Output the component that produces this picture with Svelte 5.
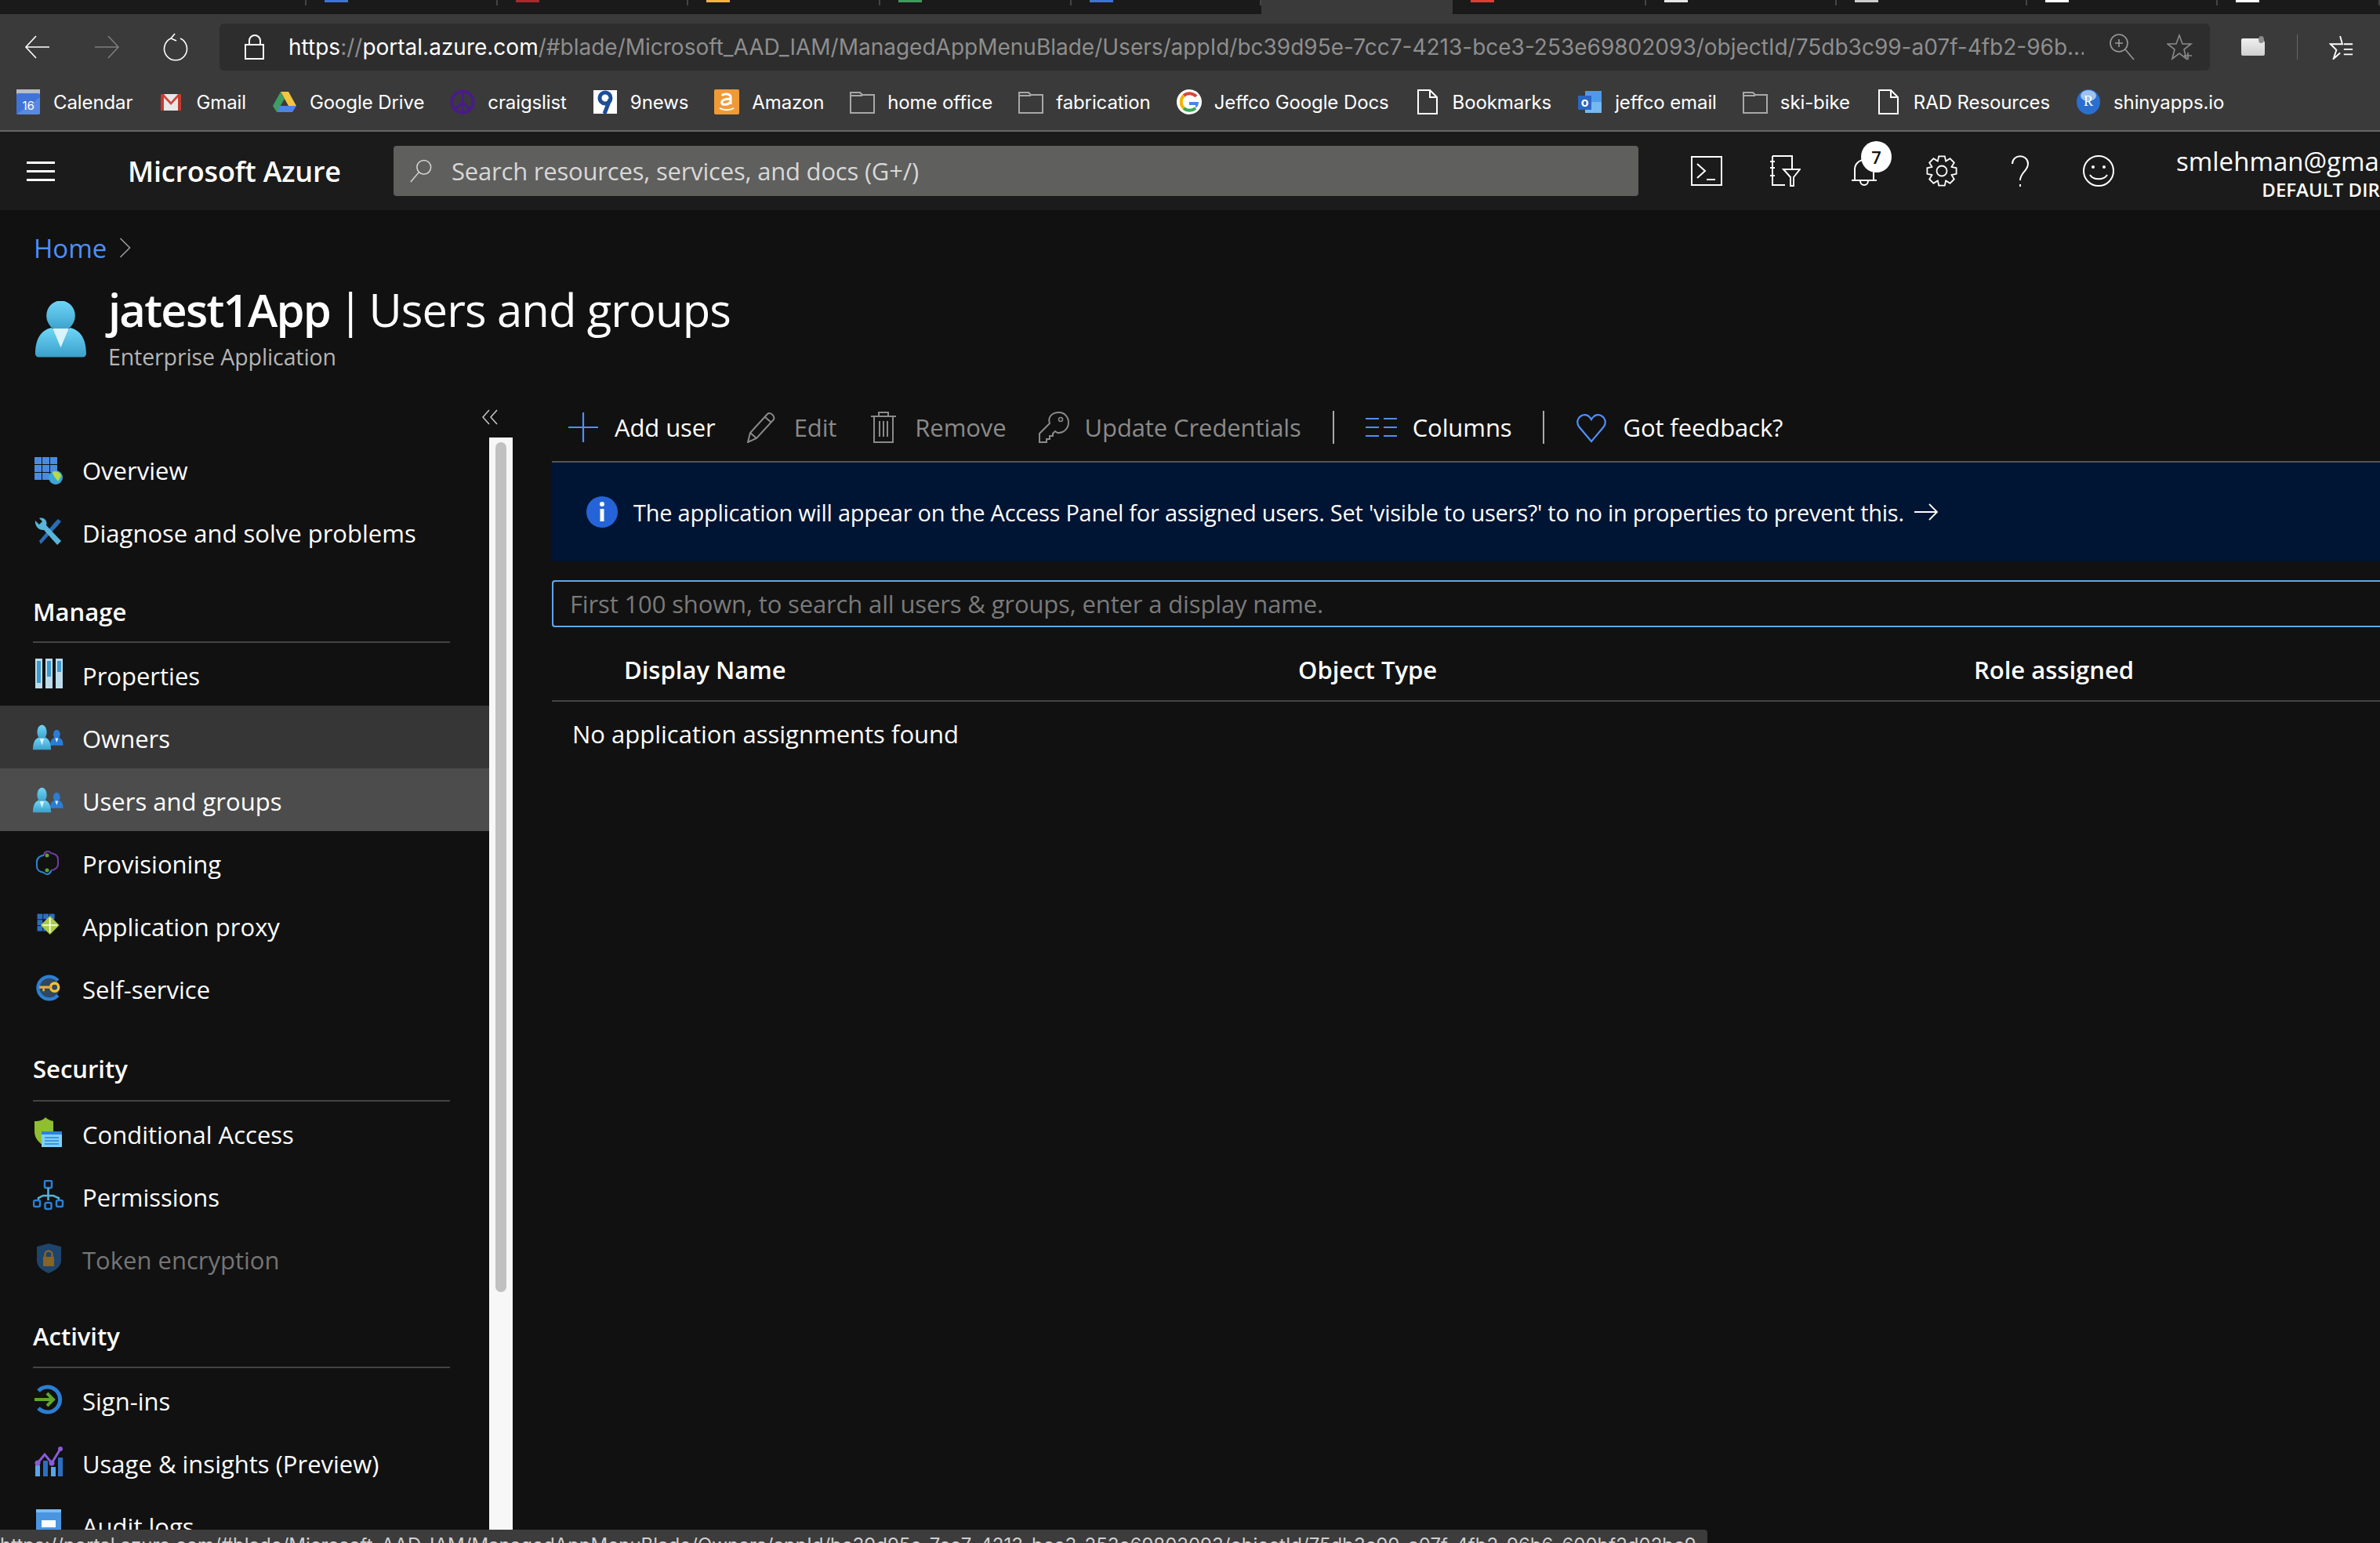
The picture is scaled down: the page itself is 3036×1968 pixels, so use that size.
<script>
  const tabs = [
    { color: '', width: 391 },
    { color: '#3f73d8', width: 244 },
    { color: '#b3242c', width: 243 },
    { color: '#f2b53c', width: 245 },
    { color: '#3f9a5c', width: 244 },
    { color: '#3f73d8', width: 242 },
  ];
  const tabsRight = [
    { color: '#e23b34', width: 247 },
    { color: '#e6e6e6', width: 243 },
    { color: '#cccccc', width: 243 },
    { color: '#ffffff', width: 243 },
    { color: '#ffffff', width: 207 },
  ];

  const bookmarks = [
    { icon: 'calendar', label: 'Calendar' },
    { icon: 'gmail', label: 'Gmail' },
    { icon: 'drive', label: 'Google Drive' },
    { icon: 'peace', label: 'craigslist' },
    { icon: 'nine', label: '9news' },
    { icon: 'amazon', label: 'Amazon' },
    { icon: 'folder', label: 'home office' },
    { icon: 'folder', label: 'fabrication' },
    { icon: 'google', label: 'Jeffco Google Docs' },
    { icon: 'page', label: 'Bookmarks' },
    { icon: 'outlook', label: 'jeffco email' },
    { icon: 'folder', label: 'ski-bike' },
    { icon: 'page', label: 'RAD Resources' },
    { icon: 'rlogo', label: 'shinyapps.io' },
  ];

  const nav = [
    { items: [
      { icon: 'overview', label: 'Overview' },
      { icon: 'tools', label: 'Diagnose and solve problems' },
    ] },
    { title: 'Manage', cls: 'manage', items: [
      { icon: 'properties', label: 'Properties' },
      { icon: 'people', label: 'Owners', state: 'hover' },
      { icon: 'people', label: 'Users and groups', state: 'active' },
      { icon: 'provisioning', label: 'Provisioning' },
      { icon: 'proxy', label: 'Application proxy' },
      { icon: 'selfservice', label: 'Self-service' },
    ] },
    { title: 'Security', cls: 'security', items: [
      { icon: 'conditional', label: 'Conditional Access' },
      { icon: 'permissions', label: 'Permissions' },
      { icon: 'token', label: 'Token encryption', state: 'dim' },
    ] },
    { title: 'Activity', cls: 'activity', items: [
      { icon: 'signin', label: 'Sign-ins' },
      { icon: 'usage', label: 'Usage & insights (Preview)' },
      { icon: 'audit', label: 'Audit logs' },
    ] },
  ];

  // 8 tooth gear outline, centred on 20,20
  function gearPath() {
    const pts = [];
    for (let i = 0; i < 8; i++) {
      const a = (i * Math.PI) / 4 - Math.PI / 2;
      const spots = [
        [-0.39, 13.5],
        [-0.2, 19],
        [0.2, 19],
        [0.39, 13.5],
      ];
      for (const [da, r] of spots) {
        const x = 20 + r * Math.cos(a + da);
        const y = 20 + r * Math.sin(a + da);
        pts.push(`${x.toFixed(1)} ${y.toFixed(1)}`);
      }
    }
    return 'M' + pts.join('L') + 'Z';
  }
  const gear = gearPath();
</script>

{#snippet person(x, y, sx, sy, fill)}
  <g transform="translate({x} {y}) scale({sx} {sy})">
    <ellipse cx="16" cy="9" rx="8.5" ry="9.5" fill={fill} />
    <path d="M0 32c0-10 4-15 11-16l5 6 5-6c7 1 11 6 11 16z" fill={fill} />
    <path d="M12 17h8l-4 9z" fill="#d9f3fb" />
  </g>
{/snippet}

{#snippet bookmarkIcon(name)}
  {#if name === 'calendar'}
    <svg class="bm-icon" viewBox="0 0 32 32">
      <rect x="1" y="0" width="30" height="8" fill="#b9bcc2" />
      <rect x="1" y="5" width="30" height="27" rx="2" fill="#3f73d8" />
      <path d="M1 32 31 10v20a2 2 0 0 1-2 2z" fill="#5a88e0" />
      <text x="16" y="26" class="cal-num">16</text>
    </svg>
  {:else if name === 'gmail'}
    <svg class="bm-icon" viewBox="0 0 32 32">
      <rect x="3" y="6" width="26" height="21" rx="1" fill="#e8e8e8" />
      <path d="M3 6h4l9 10 9-10h4L16 20z" fill="#d44638" />
      <rect x="3" y="6" width="4" height="21" fill="#c23b2f" />
      <rect x="25" y="6" width="4" height="21" fill="#c23b2f" />
    </svg>
  {:else if name === 'drive'}
    <svg class="bm-icon" viewBox="0 0 32 32">
      <path d="M11 3h10l10 18H21z" fill="#f4c63d" />
      <path d="M11 3 1 21l5 8L16 12z" fill="#3f9d62" />
      <path d="M10 21h21l-5 8H6z" fill="#4a86e8" />
    </svg>
  {:else if name === 'peace'}
    <svg class="bm-icon" viewBox="0 0 32 32">
      <circle cx="16" cy="16" r="13.500" fill="none" stroke="#4a1a8c" stroke-width="4" />
      <path d="M16 2v28M16 16 6 26M16 16l10 10" stroke="#4a1a8c" stroke-width="3" fill="none" />
    </svg>
  {:else if name === 'nine'}
    <svg class="bm-icon" viewBox="0 0 32 32">
      <rect x="1" y="1" width="30" height="30" fill="#fff" />
      <circle cx="16" cy="11" r="7" fill="none" stroke="#1c4e9a" stroke-width="5" />
      <path d="M22 13 15 31" stroke="#1c4e9a" stroke-width="5" />
    </svg>
  {:else if name === 'amazon'}
    <svg class="bm-icon" viewBox="0 0 32 32">
      <rect x="0" y="0" width="32" height="32" rx="2" fill="#f09a37" />
      <path d="M10 8c2-3 11-3 11 2v9M21 12c-10 0-12 3-11 6 1 2 8 2 11-2" fill="none" stroke="#fff" stroke-width="3" />
      <path d="M7 24c5 3 13 3 18 0" fill="none" stroke="#fff" stroke-width="2" />
    </svg>
  {:else if name === 'folder'}
    <svg class="bm-icon" viewBox="0 0 32 32">
      <path d="M1 4h12l3 3h15v23H1zM1 8h15" fill="none" stroke="#a8a8a8" stroke-width="2" />
    </svg>
  {:else if name === 'google'}
    <svg class="bm-icon" viewBox="0 0 32 32">
      <circle cx="16" cy="16" r="16" fill="#fff" />
      <path d="M25 9a11.500 11.500 0 0 0-16-1" fill="none" stroke="#d8483b" stroke-width="4" />
      <path d="M9 8a11.500 11.500 0 0 0 0 16" fill="none" stroke="#f4b400" stroke-width="4" />
      <path d="M9 24a11.500 11.500 0 0 0 15 0" fill="none" stroke="#3aa757" stroke-width="4" />
      <path d="M24 24c3-2 4-5 4-8H16v4h8" fill="#4a86e8" />
    </svg>
  {:else if name === 'page'}
    <svg class="bm-icon" viewBox="0 0 32 32">
      <path d="M4 1h15l9 9v21H4zM19 1v9h9" fill="none" stroke="#fff" stroke-width="2" />
    </svg>
  {:else if name === 'outlook'}
    <svg class="bm-icon" viewBox="0 0 32 32">
      <rect x="10" y="2" width="21" height="28" fill="#4c9be8" />
      <path d="M10 16h21v14H10z" fill="#76b9f0" />
      <rect x="1" y="8" width="17" height="18" fill="#2a66c4" />
      <text x="9.500" y="22" class="ol-text">o</text>
    </svg>
  {:else}
    <svg class="bm-icon" viewBox="0 0 32 32">
      <ellipse cx="16" cy="16" rx="15" ry="16" fill="#2a6fd0" />
      <ellipse cx="16" cy="8" rx="10" ry="7" fill="#9cc3f0" />
      <text x="16" y="21" class="r-text">R</text>
    </svg>
  {/if}
{/snippet}

{#snippet navIcon(name)}
  <svg class="nav-icon" viewBox="0 0 40 40">
    {#if name === 'overview'}
      <g fill="#4a8be0">
        <rect x="2" y="3" width="9" height="9" /><rect x="12" y="3" width="9" height="9" /><rect x="22" y="3" width="9" height="9" />
        <rect x="2" y="13" width="9" height="9" /><rect x="12" y="13" width="9" height="9" /><rect x="22" y="13" width="9" height="9" />
        <rect x="2" y="23" width="9" height="9" /><rect x="12" y="23" width="9" height="9" />
      </g>
      <circle cx="29" cy="29" r="9" fill="#3aa5d8" />
      <path d="M25 22c4-2 10 0 11 5l-4 7c-2-3-7-8-7-12z" fill="#b7d94a" />
    {:else if name === 'tools'}
      <path d="M8 30 27 7l5-5 4 3-4 5-22 24z" fill="#2a6cb5" />
      <path d="M3 4l5 5 4-4-4-4c6-2 11 3 9 9l19 20-5 5L14 16c-6 1-12-5-11-12z" fill="#59b4d9" />
    {:else if name === 'properties'}
      <rect x="3" y="0" width="9" height="38" fill="#bcdcec" /><rect x="5" y="3" width="5" height="28" fill="#3a9bd0" />
      <rect x="16" y="0" width="9" height="38" fill="#bcdcec" /><rect x="18" y="3" width="5" height="20" fill="#3a9bd0" />
      <rect x="29" y="0" width="9" height="38" fill="#bcdcec" /><rect x="31" y="3" width="5" height="14" fill="#3a9bd0" />
    {:else if name === 'people'}
      {@render person(22, 11, 0.52, 0.62, '#2b7cd3')}
      {@render person(0, 5, 0.72, 0.98, 'url(#personGrad)')}
    {:else if name === 'provisioning'}
      <path d="M14 11a5 5 0 0 1 9-3c6 1 9 3 9 8v6c0 5-5 8-9 8" fill="none" stroke="#6b3fa0" stroke-width="2" />
      <path d="M23 30a5 5 0 0 1-9 3c-6-1-9-3-9-8v-6c0-5 5-8 9-8" fill="none" stroke="#2f86cf" stroke-width="2" />
      <circle cx="18" cy="11" r="2.500" fill="#5ea52c" />
      <circle cx="18" cy="30" r="2.500" fill="#5ea52c" />
    {:else if name === 'proxy'}
      <g transform="translate(3 3) scale(0.85)">
        <g fill="#2b6fc2">
          <rect x="3" y="3" width="8" height="8" /><rect x="12" y="3" width="8" height="8" /><rect x="21" y="3" width="8" height="8" />
          <rect x="3" y="12" width="8" height="8" /><rect x="3" y="21" width="8" height="8" /><rect x="12" y="21" width="8" height="8" />
        </g>
        <path d="M20 7l14 14-14 14L6 21z" transform="translate(2 -1)" fill="#a9cc45" />
        <path d="M22 9v22M11 20h22" stroke="#fff" stroke-width="2" />
      </g>
    {:else if name === 'selfservice'}
      <g transform="translate(3 3) scale(0.85)">
        <circle cx="19" cy="20" r="17" fill="#30475f" />
        <path d="M34 9a17 17 0 1 0 0 22" fill="none" stroke="#2b7fd3" stroke-width="5" />
        <circle cx="29" cy="19" r="6" fill="none" stroke="#f2c230" stroke-width="4" />
        <path d="M6 17h18v4H14v4h-3v-4H6z" fill="#e8a93c" />
      </g>
    {:else if name === 'conditional'}
      <path d="M2 5c6 0 11-1 14-5 3 3 6 4 10 5v18c-3 7-9 11-12 13C8 33 2 27 2 18z" fill="#8fbf2f" />
      <rect x="11" y="18" width="26" height="20" fill="#7fd0f5" />
      <rect x="11" y="18" width="26" height="4" fill="#2b84d8" />
      <path d="M15 26h18M15 30h18M15 34h18" stroke="#2b84d8" stroke-width="1.500" />
    {:else if name === 'permissions'}
      <rect x="15" y="1" width="9" height="9" rx="1.500" fill="none" stroke="#2b7fd3" stroke-width="2.500" />
      <path d="M19.500 10v16M7 27v-4l6-3h13l7 3v4" fill="none" stroke="#59b4d9" stroke-width="2.500" />
      <rect x="1" y="26" width="8" height="8" rx="2" fill="none" stroke="#2b7fd3" stroke-width="2.500" />
      <rect x="15.500" y="29" width="8" height="8" rx="2" fill="none" stroke="#2b7fd3" stroke-width="2.500" />
      <rect x="30" y="26" width="8" height="8" rx="2" fill="none" stroke="#2b7fd3" stroke-width="2.500" />
    {:else if name === 'token'}
      <g opacity="0.55">
        <path d="M20 1 36 5v18c0 8-9 13-16 16C13 36 5 31 5 23V5z" fill="#2b6fb5" />
        <rect x="13" y="18" width="14" height="12" fill="#e8a93c" />
        <path d="M15.500 18v-3a4.500 4.500 0 0 1 9 0v3" fill="none" stroke="#e8a93c" stroke-width="2.500" />
      </g>
    {:else if name === 'signin'}
      <path d="M7 9a16 16 0 1 1 0 22" fill="none" stroke="#2b7fd3" stroke-width="5" />
      <path d="M2 20h24M18 12l8 8-8 8" fill="none" stroke="#5ea52c" stroke-width="4" />
    {:else if name === 'usage'}
      <rect x="3" y="24" width="6" height="14" fill="#59a5e8" />
      <rect x="13" y="18" width="6" height="20" fill="#2b6fc2" />
      <rect x="23" y="26" width="6" height="12" fill="#59a5e8" />
      <rect x="32" y="14" width="6" height="24" fill="#2b6fc2" />
      <path d="M6 21 15 10l9 11L35 3" fill="none" stroke="#8a5cd6" stroke-width="3" />
      <circle cx="6" cy="21" r="3.500" fill="#8a5cd6" /><circle cx="24" cy="21" r="3.500" fill="#8a5cd6" /><circle cx="35" cy="3" r="3" fill="#8a5cd6" />
    {:else if name === 'audit'}
      <rect x="4" y="0" width="32" height="40" rx="2" fill="#4a95e0" />
      <rect x="4" y="0" width="32" height="4" fill="#7fbcf0" />
      <rect x="11" y="14" width="18" height="9" fill="#fff" />
    {/if}
  </svg>
{/snippet}

<div class="screen">
  <svg class="defs" width="0" height="0" aria-hidden="true">
    <defs>
      <linearGradient id="personGrad" x1="0" y1="0" x2="0" y2="1">
        <stop offset="0" stop-color="#6fd6f7" />
        <stop offset="1" stop-color="#3b9fc9" />
      </linearGradient>
    </defs>
  </svg>

  <div class="tabstrip">
    {#each tabs as tab}
      <div class="tab" style="width:{tab.width}px">
        {#if tab.color}<span class="fav" style="background:{tab.color}"></span>{/if}
      </div>
    {/each}
    <div class="tab-active"></div>
    {#each tabsRight as tab}
      <div class="tab" style="width:{tab.width}px">
        <span class="fav" style="background:{tab.color}"></span>
      </div>
    {/each}
  </div>

  <div class="toolbar-chrome">
    <svg class="chrome-btn first" viewBox="0 0 36 36"><path d="M33 18H3M16 4 3 18l13 14" fill="none" stroke="#fff" stroke-width="1.600" /></svg>
    <svg class="chrome-btn" viewBox="0 0 36 36"><path d="M3 18h30M20 4l13 14-13 14" fill="none" stroke="#7d7d7d" stroke-width="1.600" /></svg>
    <svg class="chrome-btn" viewBox="0 0 36 36"><path d="M12 7a14.500 14.500 0 1 0 12 0M17 1l-5 6 7 3" fill="none" stroke="#fff" stroke-width="1.600" /></svg>
    <div class="addressbar">
      <svg class="lock" viewBox="0 0 26 32"><rect x="1" y="13" width="23" height="18" fill="none" stroke="#fff" stroke-width="2" /><path d="M6 13V8a7 7 0 0 1 14 0v5" fill="none" stroke="#fff" stroke-width="2" /></svg>
      <div class="url"><span class="w">https</span>://<span class="w">portal.azure.com</span>/#blade/Microsoft_AAD_IAM/ManagedAppMenuBlade/Users/appId/bc39d95e-7cc7-4213-bce3-253e69802093/objectId/75db3c99-a07f-4fb2-96b...</div>
      <svg class="addr-icon zoomi" viewBox="0 0 34 34"><circle cx="13" cy="12" r="11" fill="none" stroke="#9a9a9a" stroke-width="1.600" /><path d="M21 20l11 13M13 7v10M8 12h10" fill="none" stroke="#9a9a9a" stroke-width="1.600" /></svg>
      <svg class="addr-icon" viewBox="0 0 34 34"><path d="M16 2l4 11h11l-9 7 3 12-9-7-9 7 3-12-9-7h11zM27 24v9M22 28h10" fill="none" stroke="#8a8a8a" stroke-width="1.600" /></svg>
    </div>
    <div class="ext"><span class="ext-shape"></span><span class="ext-dot"></span></div>
    <span class="ext-sep"></span>
    <svg class="fav-hub" viewBox="0 0 34 34"><path d="M15 2l3 11h-4l-12 0 8 8-4 12 9-8M20 13h12M20 20h12M20 27h12" fill="none" stroke="#fff" stroke-width="2" /></svg>
  </div>

  <div class="bookmarks">
    {#each bookmarks as b}
      <div class="bookmark">
        {@render bookmarkIcon(b.icon)}
        <span>{b.label}</span>
      </div>
    {/each}
  </div>

  <header class="azure">
    <div class="hamburger"><span></span><span></span><span></span></div>
    <div class="brand">Microsoft Azure</div>
    <div class="search">
      <svg class="search-icon" viewBox="0 0 32 32"><circle cx="20" cy="11" r="9.500" fill="none" stroke="#d6d6d6" stroke-width="1.600" /><path d="M13 18 2 31" stroke="#d6d6d6" stroke-width="1.600" /></svg>
      <span>Search resources, services, and docs (G+/)</span>
    </div>
    <div class="top-icons">
      <svg class="top-icon" viewBox="0 0 40 40"><rect x="1" y="2" width="38" height="36" fill="none" stroke="#fff" stroke-width="2" /><path d="M8 11l10 9-10 9M20 31h11" fill="none" stroke="#fff" stroke-width="2" /></svg>
      <svg class="top-icon" viewBox="0 0 40 40"><path d="M4 1h25v16M20 38H4V1M1 8h6M1 16h6M1 26h6" fill="none" stroke="#fff" stroke-width="2" /><path d="M18 18h21l-8 10v11h-4V28z" fill="#1b1b1b" stroke="#fff" stroke-width="2" /></svg>
      <div class="bell">
        <svg class="top-icon" viewBox="0 0 40 40"><path d="M5 32h32M9 32V18a12 12 0 0 1 24 0v14M16 33a5 5 0 0 0 10 0" fill="none" stroke="#fff" stroke-width="2" /></svg>
        <span class="badge">7</span>
      </div>
      <svg class="top-icon" viewBox="0 0 40 40"><path d={gear} fill="none" stroke="#fff" stroke-width="1.800" /><circle cx="20" cy="20" r="6.500" fill="none" stroke="#fff" stroke-width="1.800" /></svg>
      <svg class="top-icon" viewBox="0 0 40 40"><path d="M10 11c0-13 20-13 20 0 0 9-10 11-10 21M20 37v3" fill="none" stroke="#fff" stroke-width="2" /></svg>
      <svg class="top-icon" viewBox="0 0 40 40"><circle cx="20" cy="20" r="19" fill="none" stroke="#fff" stroke-width="2" /><circle cx="13" cy="15" r="2" fill="#fff" /><circle cx="27" cy="15" r="2" fill="#fff" /><path d="M9 25c4 7 18 7 22 0" fill="none" stroke="#fff" stroke-width="2" /></svg>
    </div>
    <div class="account">
      <div class="email">smlehman@gmail.com</div>
      <div class="tenant">DEFAULT DIRECTORY</div>
    </div>
  </header>

  <div class="crumbs">
    <a href="#home">Home</a>
    <svg class="crumb-sep" viewBox="0 0 16 28"><path d="M1 1l13 13L1 27" fill="none" stroke="#a0a0a0" stroke-width="1.600" /></svg>
  </div>

  <div class="page-title">
    <svg class="title-icon" viewBox="0 0 64 70">
      <ellipse cx="32" cy="18" rx="18" ry="19" fill="url(#personGrad)" />
      <path d="M0 66c0-20 8-30 20-33l12 8 12-8c12 3 20 13 20 33 0 2-2 4-4 4H4c-2 0-4-2-4-4z" fill="url(#personGrad)" />
      <path d="M22 34h20l-10 24z" fill="#d9f3fb" />
    </svg>
    <div>
      <h1><b>jatest1App</b> <span class="pipe">|</span> Users and groups</h1>
      <div class="subtitle">Enterprise Application</div>
    </div>
  </div>

  <div class="columns">
    <aside class="side">
      <svg class="collapse" viewBox="0 0 20 20"><path d="M9 1 1 10l8 9M19 1l-8 9 8 9" fill="none" stroke="#c8c8c8" stroke-width="1.500" /></svg>
      <nav class="menu">
        {#each nav as group}
          {#if group.title}
            <div class="group-title {group.cls}"><span>{group.title}</span></div>
          {/if}
          {#each group.items as item}
            <div class="nav-row {item.state ?? ''}">
              {@render navIcon(item.icon)}
              <span>{item.label}</span>
            </div>
          {/each}
        {/each}
      </nav>
      <div class="scroll"><div class="thumb"></div></div>
    </aside>

    <main class="content">
      <div class="commands">
        <div class="cmd add">
          <svg class="cmd-icon plus" viewBox="0 0 40 40"><path d="M20 1v38M1 20h38" stroke="#4f8ff7" stroke-width="2.200" /></svg>
          <span>Add user</span>
        </div>
        <div class="cmd off edit">
          <svg class="cmd-icon" viewBox="0 0 40 40"><path d="M1 39l3-12L26 3c3-3 10 2 8 7L12 34zM4 27l8 7M23 7l8 7" fill="none" stroke="#8a8a8a" stroke-width="2" /></svg>
          <span>Edit</span>
        </div>
        <div class="cmd off remove">
          <svg class="cmd-icon" viewBox="0 0 40 40"><path d="M4 6h32M14 6V1h12v5M8 6v33h24V6M15 12v20M20 12v20M25 12v20" fill="none" stroke="#8a8a8a" stroke-width="2" /></svg>
          <span>Remove</span>
        </div>
        <div class="cmd off key">
          <svg class="cmd-icon" viewBox="0 0 40 40"><path d="M2 39V28l13-13C12 6 19 1 27 1c7 0 12 6 12 13 0 8-7 14-14 13l-3-2-3 3v3h-4v4h-4v4z" fill="none" stroke="#8a8a8a" stroke-width="2" /><circle cx="29" cy="10" r="2.500" fill="none" stroke="#8a8a8a" stroke-width="1.500" /></svg>
          <span>Update Credentials</span>
        </div>
        <span class="cmd-sep"></span>
        <div class="cmd cols">
          <svg class="cmd-icon" viewBox="0 0 40 40"><path d="M0 9h17M23 9h17M0 20h17M23 20h17M0 31h17M23 31h17" stroke="#4f8ff7" stroke-width="2.200" /></svg>
          <span>Columns</span>
        </div>
        <span class="cmd-sep"></span>
        <div class="cmd feedback">
          <svg class="cmd-icon" viewBox="0 0 40 40"><path d="M20 38 4 19C-3 8 13-3 20 10 27-3 43 8 36 19z" fill="none" stroke="#4f8ff7" stroke-width="2.200" /></svg>
          <span>Got feedback?</span>
        </div>
      </div>

      <div class="banner">
        <svg class="info" viewBox="0 0 40 40"><circle cx="20" cy="20" r="20" fill="#2564d8" /><circle cx="20" cy="10" r="3" fill="#fff" /><rect x="17.500" y="16" width="5" height="16" fill="#fff" /></svg>
        <span>The application will appear on the Access Panel for assigned users. Set 'visible to users?' to no in properties to prevent this.</span>
        <svg class="banner-arrow" viewBox="0 0 32 24"><path d="M1 12h29M20 2l10 10-10 10" fill="none" stroke="#fff" stroke-width="1.800" /></svg>
      </div>

      <div class="filter">First 100 shown, to search all users &amp; groups, enter a display name.</div>

      <div class="table-head">
        <div>Display Name</div>
        <div>Object Type</div>
        <div>Role assigned</div>
      </div>
      <div class="empty">No application assignments found</div>
    </main>
  </div>

  <div class="statusbar">https://portal.azure.com/#blade/Microsoft_AAD_IAM/ManagedAppMenuBlade/Owners/appId/bc39d95e-7cc7-4213-bce3-253e69802093/objectId/75db3c99-a07f-4fb2-96b6-600bf2d02bc9</div>
</div>

<style>
  :global(body) {
    margin: 0;
    background: #111;
  }

  .screen {
    position: relative;
    width: 3036px;
    height: 1968px;
    overflow: hidden;
    background: #111;
    color: #fff;
    font-family: "Open Sans", "Noto Sans", sans-serif;
  }

  .defs {
    position: absolute;
  }

  /* browser chrome */
  .tabstrip {
    display: flex;
    height: 18px;
    background: #1a1a1a;
    overflow: hidden;
  }

  .tab {
    flex: none;
    height: 7px;
    box-sizing: border-box;
    border-right: 2px solid #444;
    padding-left: 23px;
  }

  .fav {
    display: block;
    width: 30px;
    height: 3px;
  }

  .tab-active {
    flex: none;
    width: 244px;
    height: 18px;
    background: #3a3a3a;
  }

  .toolbar-chrome {
    display: flex;
    align-items: center;
    height: 72px;
    box-sizing: border-box;
    padding-top: 12px;
    background: #3a3a3a;
  }

  .chrome-btn {
    flex: none;
    width: 36px;
    height: 36px;
    margin-left: 52px;
  }

  .chrome-btn.first {
    margin-left: 30px;
  }

  .addressbar {
    display: flex;
    align-items: center;
    flex: none;
    width: 2539px;
    height: 60px;
    margin-left: 38px;
    box-sizing: border-box;
    padding-left: 32px;
    background: #2d2d2d;
    border-radius: 6px;
    color: #8e8e8e;
    font-family: Inter, "Liberation Sans", sans-serif;
    font-size: 28px;
  }

  .lock {
    flex: none;
    width: 26px;
    height: 32px;
  }

  .url {
    flex: none;
    width: 2290px;
    margin-left: 30px;
    white-space: nowrap;
    overflow: hidden;
  }

  .w {
    color: #fff;
  }

  .addr-icon {
    flex: none;
    width: 34px;
    height: 34px;
    margin-left: 40px;
  }

  .addr-icon.zoomi {
    margin-left: 32px;
  }

  .ext {
    position: relative;
    flex: none;
    width: 30px;
    height: 22px;
    margin-left: 40px;
  }

  .ext-shape {
    display: block;
    width: 30px;
    height: 22px;
    background: linear-gradient(#f0f0f0, #cfcfcf);
    border-radius: 2px 6px 2px 2px;
  }

  .ext-dot {
    position: absolute;
    right: 1px;
    top: -3px;
    width: 7px;
    height: 9px;
    border-radius: 50%;
    background: #8c8c8c;
  }

  .ext-sep {
    flex: none;
    width: 1px;
    height: 32px;
    margin-left: 41px;
    background: #666;
  }

  .fav-hub {
    flex: none;
    width: 32px;
    height: 32px;
    margin-left: 40px;
  }

  .bookmarks {
    display: flex;
    align-items: center;
    gap: 33px;
    height: 78px;
    box-sizing: border-box;
    padding: 4px 0 0 20px;
    background: #3a3a3a;
    border-bottom: 2px solid #666;
    font-family: Inter, "Liberation Sans", sans-serif;
    font-size: 24px;
    letter-spacing: -0.1px;
  }

  .bookmark {
    display: flex;
    align-items: center;
    gap: 16px;
    white-space: nowrap;
  }

  .bm-icon {
    flex: none;
    width: 32px;
    height: 32px;
  }

  .cal-num {
    fill: #fff;
    font-size: 15px;
    text-anchor: middle;
  }

  .ol-text {
    fill: #fff;
    font-size: 16px;
    font-weight: 700;
    text-anchor: middle;
  }

  .r-text {
    fill: #fff;
    font-family: "Liberation Serif", serif;
    font-size: 18px;
    text-anchor: middle;
  }

  /* portal header */
  .azure {
    display: flex;
    align-items: center;
    height: 100px;
    background: #1b1b1b;
  }

  .hamburger {
    flex: none;
    display: flex;
    flex-direction: column;
    gap: 8px;
    width: 36px;
    margin-left: 34px;
  }

  .hamburger span {
    height: 3px;
    background: #fff;
  }

  .brand {
    flex: none;
    width: 339px;
    margin-left: 93px;
    font-size: 36px;
    font-weight: 600;
    letter-spacing: -0.2px;
  }

  .search {
    flex: none;
    display: flex;
    align-items: center;
    gap: 24px;
    width: 1588px;
    height: 64px;
    box-sizing: border-box;
    padding-left: 20px;
    background: #5f5f5d;
    border-radius: 4px;
    color: #d8d8d8;
    font-size: 31px;
    letter-spacing: -0.2px;
  }

  .search-icon {
    width: 30px;
    height: 30px;
  }

  .top-icons {
    flex: none;
    display: flex;
    align-items: center;
    gap: 60px;
    margin-left: 67px;
  }

  .top-icon {
    display: block;
    width: 40px;
    height: 40px;
  }

  .bell {
    position: relative;
  }

  .badge {
    position: absolute;
    left: 17px;
    top: -18px;
    width: 39px;
    height: 40px;
    border-radius: 50%;
    background: #fff;
    color: #111;
    font-size: 22px;
    font-weight: 600;
    line-height: 40px;
    text-align: center;
  }

  .account {
    flex: none;
    margin-left: 79px;
    margin-top: 8px;
    text-align: right;
  }

  .email {
    font-size: 33px;
    line-height: 40px;
  }

  .tenant {
    font-size: 24px;
    font-weight: 600;
    line-height: 32px;
  }

  /* blade header */
  .crumbs {
    display: flex;
    align-items: center;
    gap: 16px;
    height: 48px;
    padding-left: 43px;
    margin-top: 24px;
    font-size: 33px;
  }

  .crumbs a {
    color: #4f8ff7;
    text-decoration: none;
  }

  .crumb-sep {
    width: 16px;
    height: 26px;
  }

  .page-title {
    display: flex;
    align-items: flex-start;
    gap: 28px;
    height: 160px;
    padding-left: 45px;
    box-sizing: border-box;
  }

  .title-icon {
    flex: none;
    width: 65px;
    height: 72px;
    margin-top: 44px;
  }

  h1 {
    margin: 17px 0 0;
    font-size: 58px;
    font-weight: 400;
    letter-spacing: -0.9px;
    line-height: 76px;
    white-space: nowrap;
  }

  h1 b {
    font-weight: 600;
    letter-spacing: -1.8px;
  }

  .pipe {
    margin: 0 -6px 0 -4px;
  }

  .subtitle {
    margin-top: 2px;
    color: #b5b5b5;
    font-size: 28.5px;
    letter-spacing: -0.1px;
    line-height: 40px;
  }

  .columns {
    display: flex;
    align-items: flex-start;
  }

  /* left menu */
  .side {
    position: relative;
    flex: none;
    display: flex;
    width: 704px;
    height: 1500px;
    padding-top: 58px;
    box-sizing: border-box;
  }

  .collapse {
    position: absolute;
    left: 615px;
    top: 22px;
    width: 20px;
    height: 20px;
  }

  .menu {
    flex: none;
    width: 624px;
    padding-top: 2px;
  }

  .scroll {
    flex: none;
    width: 30px;
    height: 1440px;
    padding: 6px 8px;
    box-sizing: border-box;
    background: #f7f7f7;
  }

  .thumb {
    width: 14px;
    height: 1084px;
    background: #c1c1c1;
    border-radius: 7px;
    margin: 0 auto;
  }

  .nav-row {
    display: flex;
    align-items: center;
    gap: 23px;
    height: 80px;
    padding-left: 42px;
    font-size: 31px;
    white-space: nowrap;
  }

  .group-title ~ .nav-row span {
    margin-top: 4px;
  }

  .nav-row.hover {
    background: #363636;
  }

  .nav-row.active {
    background: #4c4c4c;
  }

  .nav-row.dim {
    color: #757575;
  }

  .nav-icon {
    flex: none;
    width: 40px;
    height: 40px;
  }

  .group-title {
    display: flex;
    align-items: flex-end;
    height: 100px;
    box-sizing: border-box;
    margin: 0 50px 0 42px;
    padding-bottom: 17px;
    border-bottom: 2px solid #444;
    font-size: 31px;
    font-weight: 600;
  }

  .group-title.security {
    height: 105px;
    padding-bottom: 19px;
  }

  .group-title.activity {
    height: 100px;
    padding-bottom: 18px;
  }

  /* right pane */
  .content {
    flex: none;
    width: 2332px;
  }

  .commands {
    display: flex;
    align-items: center;
    height: 90px;
    box-sizing: border-box;
    padding-top: 2px;
    border-bottom: 2px solid #555;
    font-size: 31px;
    letter-spacing: -0.1px;
    white-space: nowrap;
  }

  .cmd {
    flex: none;
    display: flex;
    align-items: center;
    gap: 20px;
  }

  .cmd.off {
    color: #8a8a8a;
  }

  .cmd-icon {
    flex: none;
    width: 40px;
    height: 40px;
  }

  .add {
    margin-left: 20px;
  }

  .edit,
  .remove,
  .key {
    margin-left: 40px;
  }

  .cmd-sep {
    flex: none;
    width: 2px;
    height: 42px;
    margin: 0 40px;
    background: #aaa;
  }

  .banner {
    display: flex;
    align-items: center;
    height: 126px;
    padding-left: 44px;
    background: #001433;
    font-size: 29px;
    letter-spacing: -0.25px;
    white-space: nowrap;
  }

  .info {
    flex: none;
    width: 40px;
    height: 40px;
    margin-right: 20px;
  }

  .banner-arrow {
    flex: none;
    width: 32px;
    height: 24px;
    margin-left: 12px;
  }

  .filter {
    height: 60px;
    margin-top: 24px;
    box-sizing: border-box;
    padding-left: 21px;
    border: 2px solid #5ca8f0;
    border-right: 0;
    border-radius: 4px 0 0 4px;
    color: #7a7a7a;
    font-size: 31px;
    letter-spacing: -0.14px;
    line-height: 56px;
    white-space: nowrap;
  }

  .table-head {
    display: grid;
    grid-template-columns: 860px 862px 1fr;
    align-items: center;
    height: 95px;
    box-sizing: border-box;
    padding-left: 92px;
    padding-top: 14px;
    border-bottom: 2px solid #444;
    font-size: 31px;
    font-weight: 600;
  }

  .empty {
    padding-left: 26px;
    margin-top: 19px;
    font-size: 31px;
    line-height: 44px;
  }

  .statusbar {
    position: absolute;
    left: 0;
    bottom: 0;
    width: 2178px;
    height: 17px;
    overflow: hidden;
    background: #3c3c3c;
    border-radius: 0 4px 0 0;
    color: #cfcfcf;
    font-family: Inter, "Liberation Sans", sans-serif;
    font-size: 24px;
    line-height: 24px;
    padding-top: 8px;
    box-sizing: border-box;
    white-space: nowrap;
  }
</style>
